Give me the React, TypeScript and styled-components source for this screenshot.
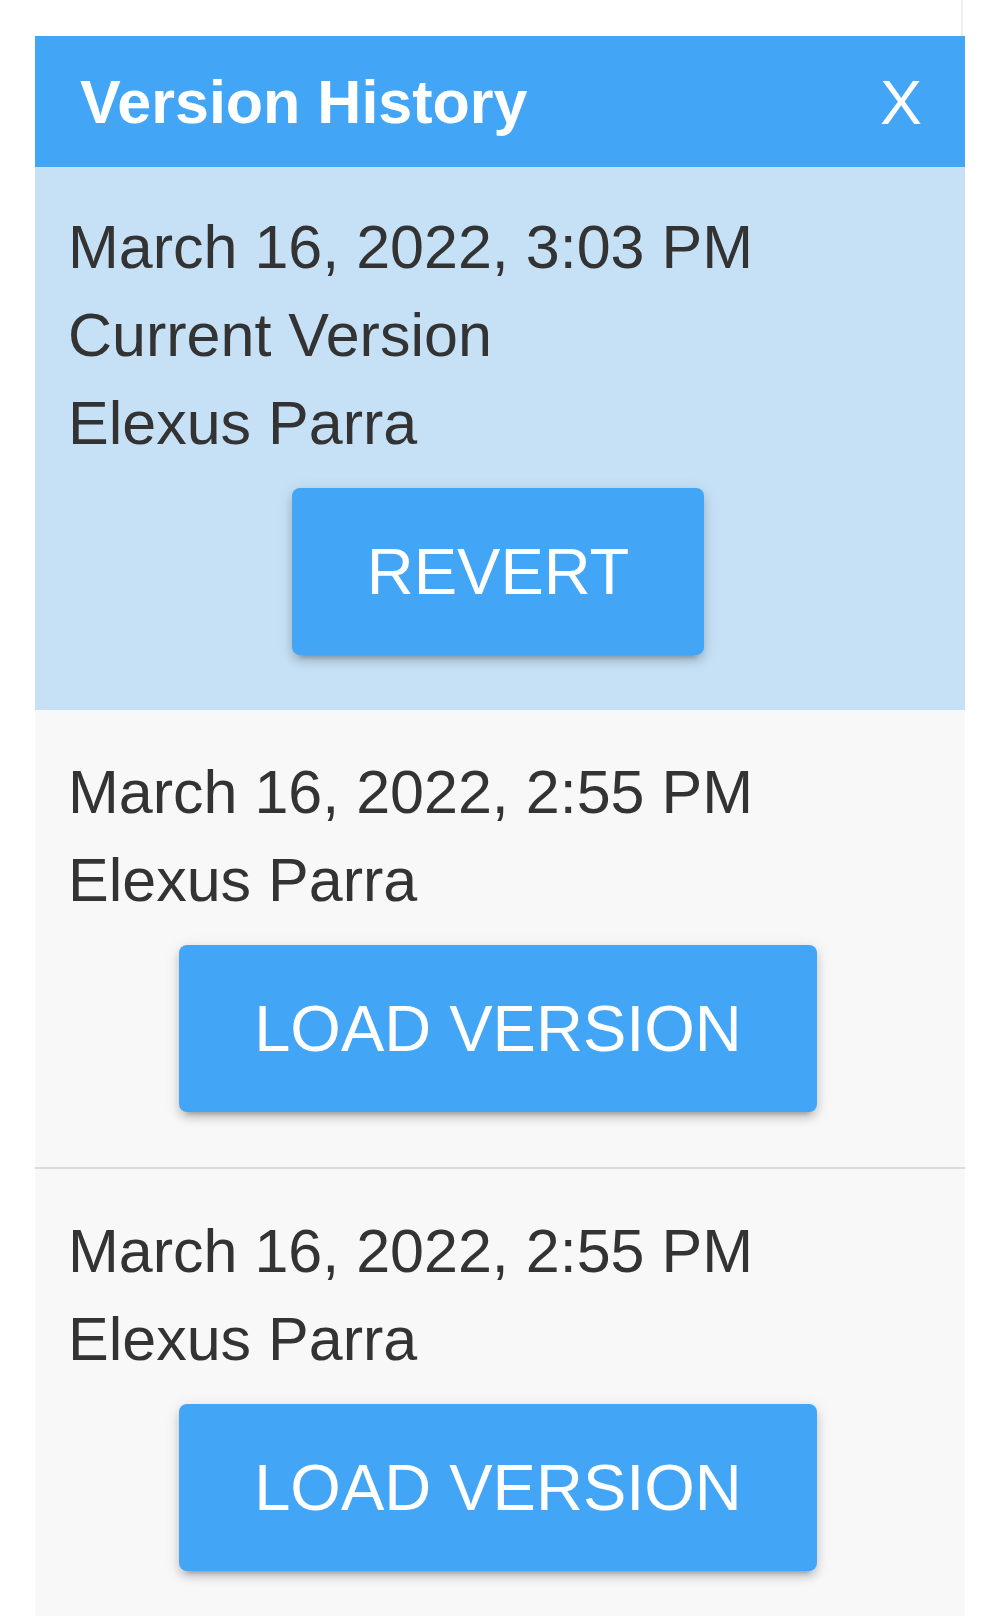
import * as React from 'react';
import styled, { createGlobalStyle } from 'styled-components';

const GlobalStyle = createGlobalStyle`
  html, body {
    margin: 0;
    padding: 0;
    background: #ffffff;
    overflow: hidden;
    font-family: "Liberation Sans", Arial, sans-serif;
  }
`;

const Frame = styled.div`
  box-sizing: border-box;
  width: 963px;
  min-height: 1616px;
  padding: 36px 0 0 35px;
  border-right: 2px solid #eeeeee;
`;

const Panel = styled.section`
  width: 930px;
  background: #f8f8f8;
`;

const Header = styled.header`
  box-sizing: border-box;
  height: 131px;
  padding: 0 43px 0 45px;
  display: flex;
  align-items: center;
  justify-content: space-between;
  background: #42a5f5;
  color: #ffffff;
`;

const Title = styled.h2`
  margin: 0;
  font-size: 61px;
  font-weight: 700;
  line-height: normal;
`;

const CloseButton = styled.button`
  padding: 0;
  border: none;
  background: none;
  color: #ffffff;
  font-family: inherit;
  font-size: 63px;
  line-height: normal;
  cursor: pointer;
`;

const Entry = styled.div<{ $current?: boolean }>`
  padding: ${p => (p.$current ? '36px' : '38px')} 37px 55px 33px;
  background: ${p => (p.$current ? '#c6e1f6' : '#f8f8f8')};
  border-bottom: ${p => (p.$current ? 'none' : '2px solid #dcdcdc')};
`;

const Line = styled.div`
  font-size: 61px;
  line-height: 88px;
  color: #333333;
  white-space: nowrap;
`;

const Actions = styled.div`
  display: flex;
  justify-content: center;
  margin-top: 21px;
`;

const ActionButton = styled.button`
  box-sizing: border-box;
  height: 167px;
  padding: 0 75px;
  border: none;
  border-radius: 8px;
  background: #42a5f5;
  color: #ffffff;
  font-family: inherit;
  font-size: 65px;
  text-transform: uppercase;
  box-shadow: 0 10px 4px -8px rgba(0, 0, 0, 0.2), 0 6px 8px 0 rgba(0, 0, 0, 0.14),
    0 3px 16px 0 rgba(0, 0, 0, 0.12);
  cursor: pointer;
`;

interface Version {
  date: string;
  author: string;
  current?: boolean;
}

const versions: Version[] = [
  { date: 'March 16, 2022, 3:03 PM', author: 'Elexus Parra', current: true },
  { date: 'March 16, 2022, 2:55 PM', author: 'Elexus Parra' },
  { date: 'March 16, 2022, 2:55 PM', author: 'Elexus Parra' }
];

export default function App() {
  return (
    <>
      <GlobalStyle />
      <Frame>
        <Panel>
          <Header>
            <Title>Version History</Title>
            <CloseButton type="button">X</CloseButton>
          </Header>
          {versions.map((version, index) => (
            <Entry key={index} $current={version.current}>
              <Line>{version.date}</Line>
              {version.current && <Line>Current Version</Line>}
              <Line>{version.author}</Line>
              <Actions>
                <ActionButton type="button">
                  {version.current ? 'Revert' : 'Load Version'}
                </ActionButton>
              </Actions>
            </Entry>
          ))}
        </Panel>
      </Frame>
    </>
  );
}
